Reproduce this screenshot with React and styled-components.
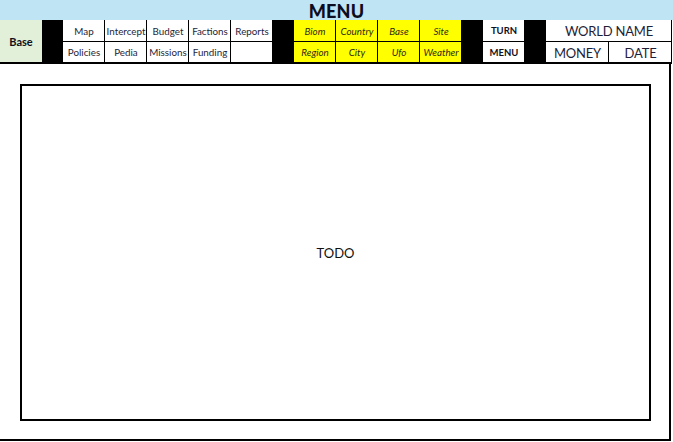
import React from "react";
import styled, { createGlobalStyle } from "styled-components";

const GlobalStyle = createGlobalStyle`
  html, body {
    margin: 0;
    padding: 0;
    background: #ffffff;
  }
  body {
    font-family: Lato, "Liberation Sans", sans-serif;
    color: #1e1e38;
    width: 673px;
    height: 442px;
    overflow: hidden;
  }
`;

const mainLinks = [
  ["Map", "Intercept", "Budget", "Factions", "Reports"],
  ["Policies", "Pedia", "Missions", "Funding", ""],
];

const geoLinks = [
  ["Biom", "Country", "Base", "Site"],
  ["Region", "City", "Ufo", "Weather"],
];

const App = () => {
  return (
    <>
      <GlobalStyle />
      <Page>
        <TitleBar>MENU</TitleBar>
        <Toolbar>
          <BaseCell>Base</BaseCell>
          <Spacer $col={2} />
          {mainLinks.map((row, r) =>
            row.map((label, c) => (
              <Cell key={`m${r}${c}`} $col={3 + c} $row={r + 1}>
                {label}
              </Cell>
            ))
          )}
          <Spacer $col={8} />
          {geoLinks.map((row, r) =>
            row.map((label, c) => (
              <GeoCell key={`g${r}${c}`} $col={9 + c} $row={r + 1}>
                {label}
              </GeoCell>
            ))
          )}
          <Spacer $col={13} />
          <ActionCell $col={14} $row={1}>TURN</ActionCell>
          <ActionCell $col={14} $row={2}>MENU</ActionCell>
          <Spacer $col={15} />
          <InfoCell $col={16} $span={2} $row={1}>WORLD NAME</InfoCell>
          <InfoCell $col={16} $row={2}>MONEY</InfoCell>
          <InfoCell $col={17} $row={2}>DATE</InfoCell>
        </Toolbar>
        <Frame>
          <Screen>TODO</Screen>
        </Frame>
      </Page>
    </>
  );
};

const Page = styled.div`
  width: 673px;
  height: 442px;
  display: flex;
  flex-direction: column;
`;

const TitleBar = styled.div`
  height: 20px;
  background: #bfe4f4;
  display: flex;
  align-items: center;
  justify-content: center;
  font-weight: 900;
  font-size: 18px;
  letter-spacing: 0.2px;
  color: #0c0c22;
  padding-top: 1px;
  box-sizing: border-box;
`;

const Toolbar = styled.div`
  display: grid;
  grid-template-columns: 42px 21px 42px 42px 42px 42px 42px 21px 42px 42px 42px 42px 21px 42px 21px 63px 63px;
  grid-template-rows: 22px 20px;
  width: 672px;
  border-bottom: 2px solid #000;
  box-sizing: content-box;
`;

const BaseCell = styled.div`
  grid-column: 1;
  grid-row: 1 / 3;
  background: #e2f0d9;
  display: flex;
  align-items: center;
  justify-content: center;
  font-weight: 700;
  font-size: 11px;
  color: #101020;
`;

const Spacer = styled.div`
  grid-column: ${(p) => p.$col} / span 1;
  grid-row: 1 / 3;
  background: #000;
`;

const Cell = styled.div`
  grid-column: ${(p) => p.$col} / span ${(p) => p.$span || 1};
  grid-row: ${(p) => p.$row};
  background: #fff;
  border-right: 1px solid #000;
  border-bottom: ${(p) => (p.$row === 1 ? "1px solid #000" : "none")};
  display: flex;
  align-items: center;
  justify-content: center;
  font-size: 9.8px;
  white-space: nowrap;
  box-sizing: border-box;
  padding-left: 1px;
`;

const GeoCell = styled(Cell)`
  background: #ffff00;
  font-style: italic;
  color: #2a2a10;
`;

const ActionCell = styled(Cell)`
  font-weight: 700;
  font-size: 9.5px;
  color: #101020;
`;

const InfoCell = styled(Cell)`
  font-size: 13px;
  letter-spacing: -0.2px;
  padding-top: 1px;
`;

const Frame = styled.div`
  width: 671px;
  flex: 1;
  box-sizing: border-box;
  border-right: 2px solid #000;
  border-bottom: 2px solid #000;
  padding: 20px 18px 18px 20px;
  margin-bottom: 1px;
  display: flex;
`;

const Screen = styled.div`
  flex: 1;
  border: 2px solid #000;
  display: flex;
  align-items: center;
  justify-content: center;
  font-size: 13px;
  color: #111;
`;

export default App;
